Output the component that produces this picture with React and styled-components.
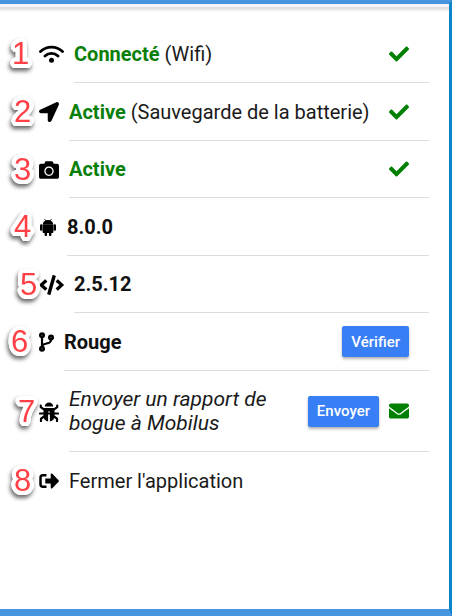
import styled, { createGlobalStyle, css } from "styled-components";
import {
  FaCamera,
  FaCheck,
  FaCode,
  FaEnvelope,
  FaLocationArrow,
} from "react-icons/fa";

const WifiIcon = () => (
  <svg viewBox="0 0 25 20" aria-hidden="true">
    <path
      d="M1.500 7.500a16 16 0 0 1 22 0M6 12a9.500 9.500 0 0 1 13 0"
      fill="none"
      stroke="currentColor"
      strokeWidth="2.800"
      strokeLinecap="round"
    />
    <circle cx="12.500" cy="16.300" r="2.500" fill="currentColor" />
  </svg>
);

const AndroidIcon = () => (
  <svg viewBox="0 0 18 20" fill="currentColor" aria-hidden="true">
    <path d="M5.200 2 6.300 3.600A5.500 5.500 0 0 0 3.600 7.200h10.800a5.500 5.500 0 0 0-2.700-3.600L12.800 2l-.5-.3-1.200 1.600a6 6 0 0 0-4.200 0L5.700 1.700z" />
    <path d="M3.600 7.300h10.800v7.600a1 1 0 0 1-1 1h-1v2a1.200 1.200 0 0 1-2.400 0v-2H8v2a1.200 1.200 0 0 1-2.400 0v-2h-1a1 1 0 0 1-1-1z" />
    <rect x="1" y="7.200" width="2.400" height="6.500" rx="1.200" />
    <rect x="14.600" y="7.200" width="2.400" height="6.500" rx="1.200" />
  </svg>
);

const BranchIcon = () => (
  <svg viewBox="0 0 15 20" aria-hidden="true">
    <path
      d="M3 3v14M12 6v1.500c0 3-1.500 3.500-4.500 4S3 13 3 15"
      fill="none"
      stroke="currentColor"
      strokeWidth="2.200"
    />
    <circle cx="3" cy="3.200" r="3" fill="currentColor" />
    <circle cx="3" cy="16.800" r="3" fill="currentColor" />
    <circle cx="12" cy="5.400" r="3" fill="currentColor" />
    <circle cx="3" cy="3.200" r=".5" fill="#999" />
    <circle cx="3" cy="16.800" r=".5" fill="#999" />
    <circle cx="12" cy="5.400" r=".5" fill="#999" />
  </svg>
);

const BugIcon = () => (
  <svg viewBox="0 0 20 20" aria-hidden="true">
    <path d="M5.800 4.600a4.200 4.200 0 0 1 8.400 0z" fill="currentColor" />
    <path
      d="M1.800 3.500v1.700L4.500 7.200h11l2.700-2V3.500M1 11.500h18M2 19v-2.300L5 14.500M18 19v-2.300L15 14.500"
      fill="none"
      stroke="currentColor"
      strokeWidth="2.200"
      strokeLinecap="round"
      strokeLinejoin="round"
    />
    <path
      d="M4.500 6.200h11V14a5.500 5.500 0 0 1-4.600 5.400V9.500H9.100v9.900A5.500 5.500 0 0 1 4.500 14z"
      fill="currentColor"
    />
  </svg>
);

const ExitIcon = () => (
  <svg viewBox="0 0 20 20" aria-hidden="true">
    <path
      d="M7.500 4.200H4a2.500 2.500 0 0 0-2.500 2.500v6.600A2.500 2.500 0 0 0 4 15.800h3.500"
      fill="none"
      stroke="currentColor"
      strokeWidth="2.500"
    />
    <path
      d="M6.300 7.500h5.400V3.500c0-.9 1-1.300 1.600-.7l6.300 6.500c.4.400.4 1 0 1.400l-6.300 6.500c-.6.600-1.600.2-1.600-.7v-4H6.300z"
      fill="currentColor"
    />
  </svg>
);

const App = () => {
  return (
    <>
      <GlobalStyle />
      <Screen>
        <Header />
        <List>
          <Row>
            <Step $left={12}>1</Step>
            <Icon $width={25}>
              <WifiIcon />
            </Icon>
            <Inner>
              <Label>
                <Status>Connecté</Status> (Wifi)
              </Label>
              <EndIcon>
                <FaCheck />
              </EndIcon>
            </Inner>
          </Row>
          <Row>
            <Step $left={14}>2</Step>
            <Icon $width={20}>
              <FaLocationArrow />
            </Icon>
            <Inner>
              <Label>
                <Status>Active</Status> (Sauvegarde de la batterie)
              </Label>
              <EndIcon>
                <FaCheck />
              </EndIcon>
            </Inner>
          </Row>
          <Row>
            <Step $left={14}>3</Step>
            <Icon $width={20}>
              <FaCamera />
            </Icon>
            <Inner>
              <Label>
                <Status>Active</Status>
              </Label>
              <EndIcon>
                <FaCheck />
              </EndIcon>
            </Inner>
          </Row>
          <Row>
            <Step $left={14}>4</Step>
            <Icon $width={18}>
              <AndroidIcon />
            </Icon>
            <Inner>
              <Label>
                <b>8.0.0</b>
              </Label>
            </Inner>
          </Row>
          <Row>
            <Step $left={20}>5</Step>
            <Icon $width={25}>
              <FaCode />
            </Icon>
            <Inner>
              <Label>
                <b>2.5.12</b>
              </Label>
            </Inner>
          </Row>
          <Row>
            <Step $left={11}>6</Step>
            <Icon $width={15}>
              <BranchIcon />
            </Icon>
            <Inner>
              <Label>
                <b>Rouge</b>
              </Label>
              <Button type="button">Vérifier</Button>
            </Inner>
          </Row>
          <Row $tall>
            <Step $left={18}>7</Step>
            <Icon $width={20}>
              <BugIcon />
            </Icon>
            <Inner>
              <Label>
                <i>Envoyer un rapport de bogue à Mobilus</i>
              </Label>
              <Button type="button">Envoyer</Button>
              <EndIcon>
                <FaEnvelope />
              </EndIcon>
            </Inner>
          </Row>
          <Row>
            <Step $left={14}>8</Step>
            <Icon $width={20}>
              <ExitIcon />
            </Icon>
            <Inner $last>
              <Label>Fermer l'application</Label>
            </Inner>
          </Row>
        </List>
      </Screen>
    </>
  );
};

export default App;

/* round white outline built from shadows on a circle */
const outline = Array.from({ length: 24 }, (_, i) => {
  const angle = (i * Math.PI) / 12;
  const x = (Math.cos(angle) * 4).toFixed(1);
  const y = (Math.sin(angle) * 4).toFixed(1);
  return `${x}px ${y}px 0 #fff`;
}).join(", ");

const GlobalStyle = createGlobalStyle`
  * {
    box-sizing: border-box;
  }

  body {
    margin: 0;
    background: #fff;
    font-family: Roboto, "Liberation Sans", sans-serif;
  }
`;

const Screen = styled.main`
  min-height: 100vh;
  border-top: 4px solid #4795e0;
  border-right: 3px solid #0c84c8;
  border-bottom: 7px solid #4795e0;
  background: #fff;
`;

const Header = styled.div`
  height: 8px;
  background: linear-gradient(#f6f4f8 35%, #dcd9de 45%, #fff);
`;

const List = styled.ul`
  margin: 0;
  padding: 13px 20px 0 39px;
  list-style: none;
`;

const Row = styled.li`
  position: relative;
  display: flex;
  align-items: center;
  gap: 10px;
  height: ${(props) => (props.$tall ? "81px" : "58px")};

  &:nth-child(3),
  &:nth-child(5) {
    height: 57px;
  }
`;

const Icon = styled.span`
  display: flex;
  flex: none;
  justify-content: center;
  width: ${(props) => props.$width}px;
  color: #000;

  svg {
    width: 100%;
    height: 20px;
  }
`;

const Inner = styled.div`
  display: flex;
  flex: 1;
  align-items: center;
  gap: 10px;
  height: 100%;
  padding-right: 20px;

  ${(props) =>
    !props.$last &&
    css`
      border-bottom: 1px solid #dcdcdc;
    `}
`;

const Label = styled.div`
  flex: 1;
  color: #1a1a1a;
  font-size: 20px;
  line-height: 24px;

  b {
    color: #111;
    font-weight: 700;
  }

  i {
    font-size: 21px;
  }
`;

const Status = styled.strong`
  color: #0a800a;
  font-weight: 700;
`;

const EndIcon = styled.span`
  display: flex;
  color: #008000;

  svg {
    width: 20px;
    height: 20px;
  }
`;

const Button = styled.button`
  height: 31px;
  padding: 0 9px;
  border: 0;
  border-radius: 2px;
  background: #387ef5;
  color: #fff;
  font-family: inherit;
  font-size: 15px;
  font-weight: 500;
  box-shadow: 0 2px 3px rgba(0, 0, 0, 0.3);
  cursor: pointer;
`;

/* numbered marker drawn over the left margin of a row */
const Step = styled.span`
  position: absolute;
  top: 50%;
  left: ${(props) => props.$left - 39}px;
  transform: translateY(-50%);
  color: #ff4046;
  font-family: "Liberation Sans", Arial, sans-serif;
  font-size: 31px;
  line-height: 32px;
  text-shadow: ${outline};
  filter: drop-shadow(-1px 3px 2px rgba(0, 0, 0, 0.6));
`;
